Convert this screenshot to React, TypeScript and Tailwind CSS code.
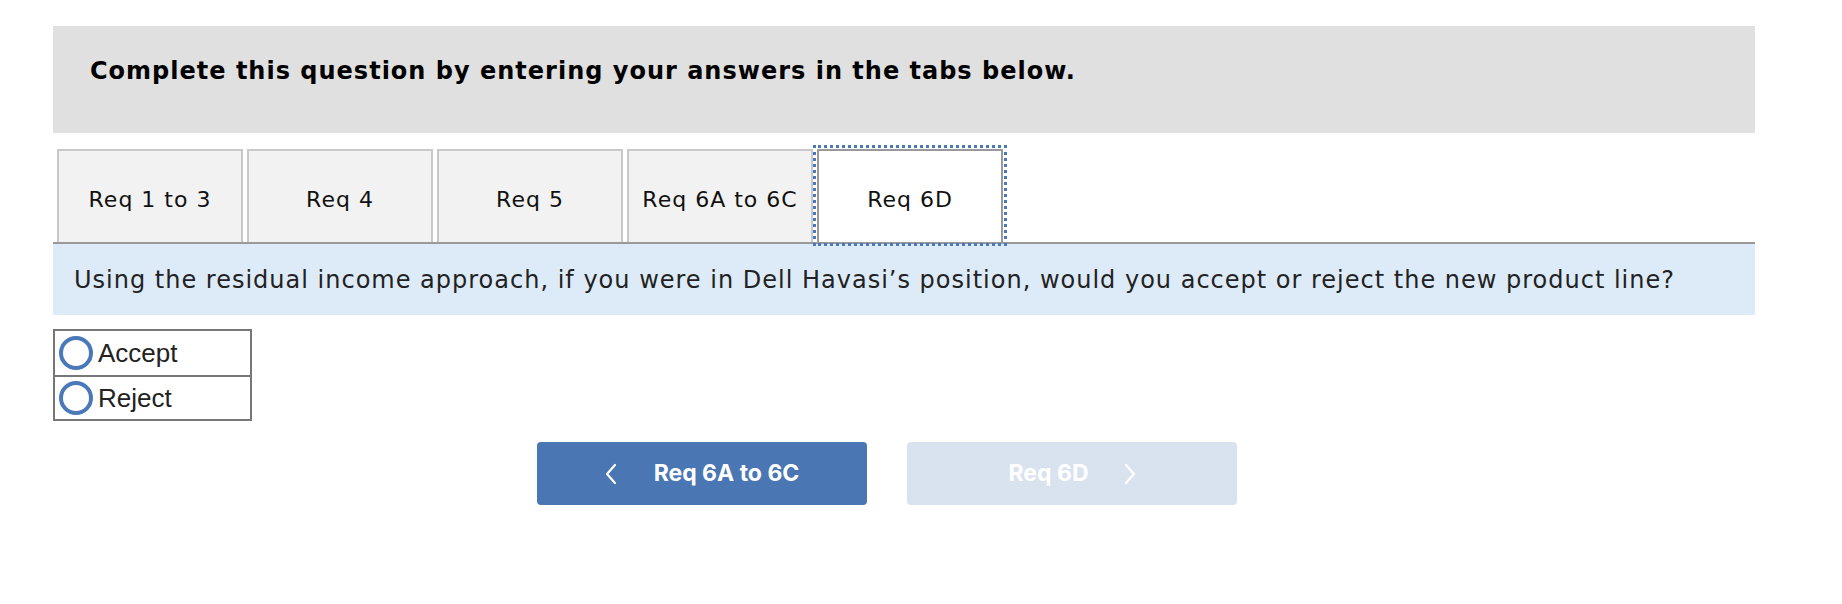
import type { ReactNode } from "react";

const tabs = ["Req 1 to 3", "Req 4", "Req 5", "Req 6A to 6C", "Req 6D"];
const activeTab = "Req 6D";
const options = ["Accept", "Reject"];

const verdana = "font-['DejaVu_Sans',Verdana,sans-serif]";

export default function App() {
  return (
    <div className="min-h-[604px] w-[1842px] bg-white">
      <div className="w-[1755px] pl-[53px] pt-[26px]">
        <div className={`h-[107px] bg-[#e0e0e0] pl-[37px] pt-[31px] ${verdana}`}>
          <h1 className="text-[24px] font-bold leading-[28px] tracking-[1px] text-black">
            Complete this question by entering your answers in the tabs below.
          </h1>
        </div>

        <div className="mt-[16px] flex gap-[4px] pl-[4px]">
          {tabs.map((tab) => (
            <Tab key={tab} active={tab === activeTab}>
              {tab}
            </Tab>
          ))}
        </div>
        <div className="h-[2px] bg-[#999999]" />

        <div className={`flex h-[71px] items-center bg-[#ddebf8] pl-[21px] ${verdana}`}>
          <p className="text-[24px] leading-[28px] tracking-[1px] text-[#222]">
            Using the residual income approach, if you were in Dell Havasi’s position, would you accept or reject the new product line?
          </p>
        </div>

        <div className="mt-[14px] w-[199px] border-2 border-[#777777] font-['Liberation_Sans',Arial,sans-serif]">
          {options.map((option, index) => (
            <label
              key={option}
              className={`flex h-[44px] items-center gap-[5px] pl-[4px] ${index > 0 ? "border-t-2 border-[#777777]" : ""}`}
            >
              <span className="h-[34px] w-[34px] shrink-0 rounded-full border-[4px] border-[#4a78b8] bg-white" />
              <span className="text-[26px] leading-none text-[#222]">{option}</span>
            </label>
          ))}
        </div>

        <div className="ml-[484px] mt-[21px] flex gap-[40px] font-['Inter',sans-serif]">
          <button
            type="button"
            className="flex h-[63px] w-[330px] items-center justify-center gap-[37px] rounded-[4px] bg-[#4a76b3] text-[23px] font-bold text-white"
          >
            <Chevron dir="left" />
            <span>Req 6A to 6C</span>
          </button>
          <button
            type="button"
            className="flex h-[63px] w-[330px] items-center justify-center gap-[35px] rounded-[4px] bg-[#d9e3ef] text-[23px] font-bold text-white"
          >
            <span>Req 6D</span>
            <Chevron dir="right" />
          </button>
        </div>
      </div>
    </div>
  );
}

function Tab({ active, children }: { active: boolean; children: ReactNode }) {
  return (
    <div
      className={`flex h-[93px] w-[186px] items-center justify-center border-2 border-b-0 pt-[7px] ${verdana} ${
        active
          ? "border-[#999999] bg-white outline-3 outline-offset-1 outline-dotted outline-[#4a78b8]"
          : "border-[#c8c8c8] bg-[#f2f2f2]"
      }`}
    >
      <span className="whitespace-nowrap text-[22px] leading-[26px] tracking-[1px] text-[#111]">{children}</span>
    </div>
  );
}

function Chevron({ dir }: { dir: "left" | "right" }) {
  return (
    <svg width="12" height="22" viewBox="0 0 12 22" fill="none" aria-hidden="true">
      <path
        d={dir === "left" ? "M10 2 L2 11 L10 20" : "M2 2 L10 11 L2 20"}
        stroke="white"
        strokeWidth="2.2"
        strokeLinecap="round"
        strokeLinejoin="round"
      />
    </svg>
  );
}
